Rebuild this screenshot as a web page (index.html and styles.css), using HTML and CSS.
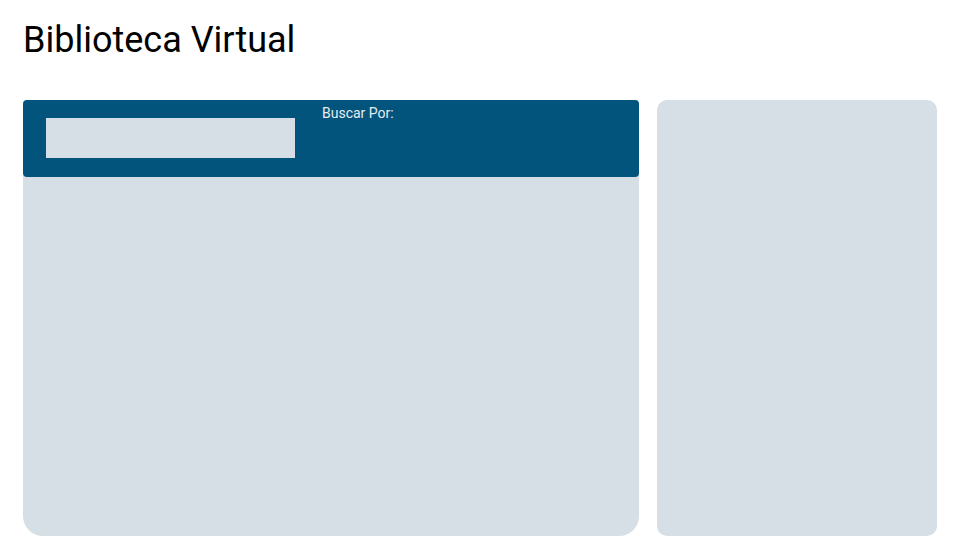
FILE: index.html
```html
<!DOCTYPE html>
<html lang="es">
<head>
<meta charset="utf-8">
<title>Biblioteca Virtual</title>
<link rel="stylesheet" href="styles.css">
</head>
<body>
<h1 class="title">Biblioteca Virtual</h1>
<div class="layout">
  <section class="main-panel">
    <div class="search-bar">
      <input class="search-input" type="text" aria-label="Buscar">
      <label class="search-label">Buscar Por:</label>
    </div>
  </section>
  <aside class="side-panel"></aside>
</div>
</body>
</html>
```
FILE: styles.css
```css
html, body {
  margin: 0;
  padding: 0;
  background: #ffffff;
}
body {
  font-family: Roboto, "Liberation Sans", sans-serif;
  padding: 0 38px 0 23px;
}
.title {
  margin: 0;
  padding-top: 19px;
  height: 100px;
  box-sizing: border-box;
  font-size: 36px;
  font-weight: 400;
  line-height: 42px;
  color: #000;
}
.layout {
  display: grid;
  grid-template-columns: 616px 280px;
  column-gap: 18px;
}
.main-panel {
  height: 436px;
  background: #d6dfe5;
  border-radius: 4px 4px 20px 20px;
}
.search-bar {
  display: flex;
  align-items: flex-start;
  height: 77px;
  box-sizing: border-box;
  padding: 18px 0 0 23px;
  background: #03547c;
  border-radius: 4px;
}
.search-input {
  width: 249px;
  height: 40px;
  box-sizing: border-box;
  border: none;
  margin: 0;
  padding: 0;
  background: #d6dfe5;
  outline: none;
}
.search-label {
  margin: -13px 0 0 27px;
  font-size: 14px;
  line-height: 16px;
  color: #e6edf2;
}
.side-panel {
  height: 436px;
  background: #d6dfe5;
  border-radius: 10px;
}
```
